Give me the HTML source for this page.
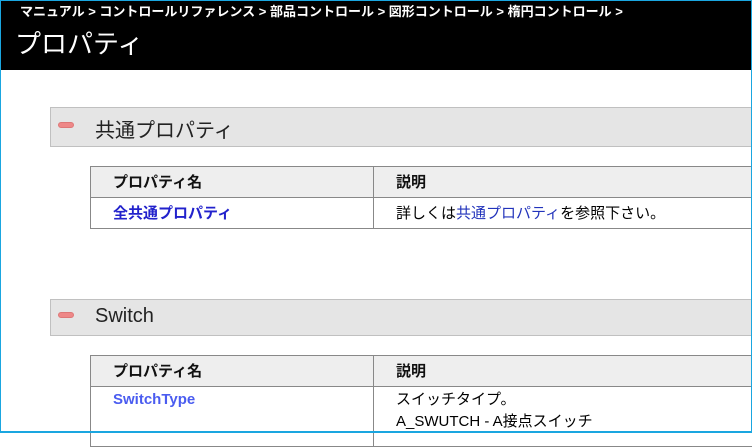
<!DOCTYPE html>
<html><head><meta charset="utf-8"><style>
*{margin:0;padding:0;box-sizing:border-box}
html,body{width:752px;height:433px;overflow:hidden;background:#fff;font-family:"Liberation Sans","Noto Sans CJK JP",sans-serif}
.frame{position:absolute;left:0;top:0;width:752px;height:433px;border:1px solid #1aa6e0;border-bottom-width:2px;pointer-events:none;z-index:5}
.hdr{position:absolute;left:0;top:0;width:752px;height:70px;background:#000;color:#fff}
.bc{position:absolute;left:20px;top:1px;font-size:13px;font-weight:bold;white-space:nowrap}
.title{position:absolute;left:15px;top:24px;font-size:26px}
.sec{position:absolute;left:50px;width:710px;height:40px;background:#e5e5e5;border:1px solid #c0c0c0;font-size:20px;color:#222}
.sec .ic{position:absolute;left:7px;top:14px;width:16px;height:6px;border-radius:3px;background:#e88;border:1px solid #d77}
.sec .t{position:absolute;left:44px;top:6px}
table{position:absolute;left:90px;width:670px;border-collapse:collapse;font-size:15px}
td,th{border:1px solid #888;height:31px;text-align:left;vertical-align:top;padding:4px 0 0 0}
th{background:#eee;font-weight:bold;color:#111}
td:first-child,th:first-child{width:283px;padding-left:22px}
td:last-child,th:last-child{padding-left:22px}
a{text-decoration:none}
</style></head><body>
<div class="hdr">
<div class="bc">マニュアル &gt; コントロールリファレンス &gt; 部品コントロール &gt; 図形コントロール &gt; 楕円コントロール &gt;</div>
<div class="title">プロパティ</div>
</div>
<div class="sec" style="top:107px"><div class="ic"></div><div class="t">共通プロパティ</div></div>
<table style="top:166px">
<tr><th>プロパティ名</th><th>説明</th></tr>
<tr><td><a style="color:#2222cc;font-weight:bold">全共通プロパティ</a></td><td>詳しくは<a style="color:#2233bb">共通プロパティ</a>を参照下さい。</td></tr>
</table>
<div class="sec" style="top:299px;height:37px"><div class="ic" style="top:12px"></div><div class="t" style="top:5px">Switch</div></div>
<table style="top:355px">
<tr><th>プロパティ名</th><th>説明</th></tr>
<tr><td style="height:60px"><a style="color:#4a5cf0;font-weight:bold">SwitchType</a></td><td style="line-height:22px;padding-top:2px">スイッチタイプ。<br>A_SWUTCH - A接点スイッチ</td></tr>
</table>
<div class="frame"></div>
</body></html>
